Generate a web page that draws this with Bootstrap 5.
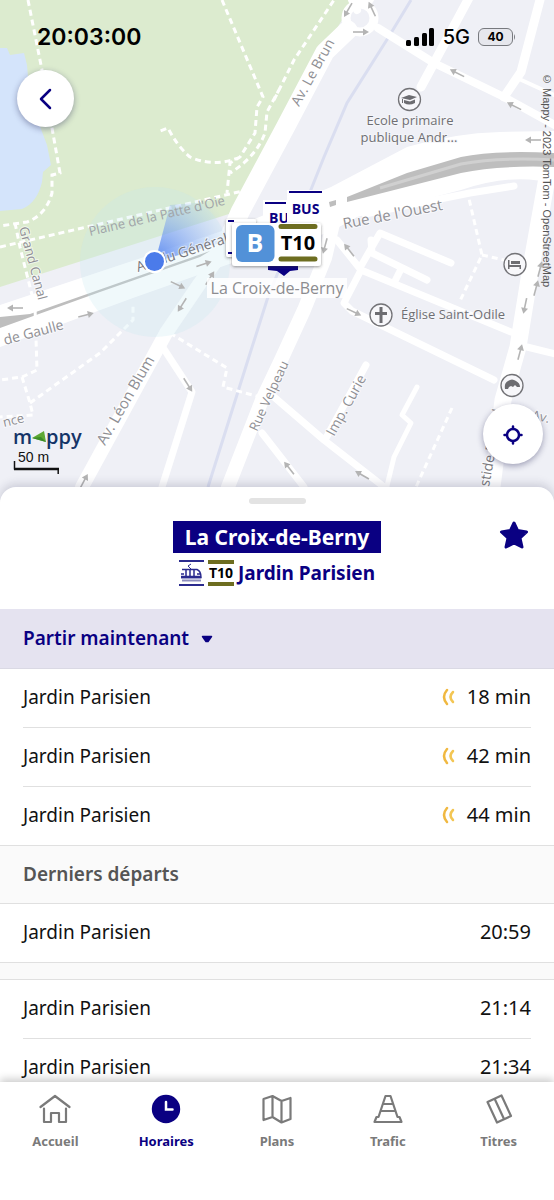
<!DOCTYPE html>
<html lang="fr">
<head>
<meta charset="utf-8">
<meta name="viewport" content="width=device-width, initial-scale=1">
<title>La Croix-de-Berny – Horaires</title>
<link href="https://cdn.jsdelivr.net/npm/bootstrap@5.3.0/dist/css/bootstrap.min.css" rel="stylesheet">
<style>
  :root { --navy: #0a0082; --line: #e0e0e0; }
  body { font-family: "Noto Sans", "Open Sans", sans-serif; color: #111; background: #fff; }
  .map-area { height: 487px; background: #eff0f6; }
  .map-drawing { width: 100%; height: 500px; display: block; }
  .map-drawing text { font-family: "Open Sans", "Noto Sans", sans-serif; }
  .status { font-family: Inter, sans-serif; color: #000; padding: 22px 38px 0 37px; line-height: 30px; }
  .clock { font-size: 23px; font-weight: 600; }
  .network { font-size: 20px; font-weight: 500; }
  .battery { width: 35px; height: 18px; line-height: 16px; font-size: 12px; font-weight: 700; border: 1px solid #77797e; border-radius: 6px; background: #e6e7ed; }
  .round-btn { background: #fff; border: 0; border-radius: 50%; padding: 0; box-shadow: 0 2px 6px rgba(30, 30, 80, .4); }
  .back-btn { width: 57px; height: 57px; left: 17px; top: 70px; }
  .locate-btn { width: 60px; height: 60px; right: 11px; bottom: 23px; }
  .attribution { writing-mode: vertical-rl; font: 11px/14px "Liberation Sans", sans-serif; color: #555; top: 73px; right: 0; }
  .map-brand { left: 13px; bottom: 13px; width: 74px; }
  .brand-name { font: 600 20px/24px "Open Sans", sans-serif; color: #143468; }
  .scale-label { font: 14px/16px "Liberation Sans", sans-serif; color: #111; padding-left: 5px; }
  .scale-bar { margin-top: -4px; }
  .sheet { background: #fff; border-radius: 16px 16px 0 0; box-shadow: 0 -3px 10px rgba(40, 40, 80, .18); min-height: 0; }
  .grip { width: 57px; height: 6px; border-radius: 3px; background: #e3e3e3; margin-top: 11px; }
  .stop-head { height: 105px; padding-top: 17px; }
  .stop-name { background: var(--navy); color: #fff; font-size: 21px; font-weight: 700; line-height: 32px; padding: 0 12px; }
  .direction { color: var(--navy); font-size: 19px; font-weight: 700; line-height: 26px; margin-top: 7px; }
  .star-btn { right: 24px; top: 15px; }
  .line-tag { width: 26px; height: 26px; border: solid #6d6d20; border-width: 4px 0; font: 700 14px/18px "Open Sans", sans-serif; color: #000; }
  .when-btn { height: 60px; background: #e5e3f0; color: var(--navy); border: 0; border-bottom: 1px solid #dad9e4; font-size: 19px; font-weight: 600; padding: 0 23px; }
  .departures { min-height: 0; overflow-y: auto; scrollbar-width: none; }
  .departures::-webkit-scrollbar { display: none; }
  .trip { height: 59px; margin: 0 23px; padding-bottom: 2px; border-bottom: 1px solid var(--line); font-size: 19px; }
  .trip-last { margin: 0; padding-left: 23px; padding-right: 23px; }
  .trip time { font-size: 20px; }
  .section-title { height: 58px; background: #fafafa; border-bottom: 1px solid var(--line); color: #555; font-size: 19px; font-weight: 600; padding: 0 23px; margin: 0; }
  .spacer-band { height: 17px; background: #fafafa; border-bottom: 1px solid var(--line); }
  .tabs { height: 118px; background: #fff; box-shadow: 0 -3px 8px rgba(0, 0, 0, .2); z-index: 2; padding-top: 11px; }
  .tab-link { color: #7a7a7a; font-size: 13px; font-weight: 700; line-height: 20px; }
  .tab-link svg { width: 32px; height: 32px; margin-bottom: 6px; }
  .tab-link.current { color: var(--navy); }
</style>
</head>
<body>
<div class="vh-100 d-flex flex-column overflow-hidden">

<header class="map-area position-relative flex-shrink-0">
  <svg class="map-drawing position-absolute top-0 start-0" viewBox="0 0 554 500" preserveAspectRatio="xMidYMin slice" role="img" aria-label="Plan du quartier">
    <defs>
      <radialGradient id="beam" gradientUnits="userSpaceOnUse" cx="155" cy="262" r="82">
        <stop offset="0" stop-color="#4a7df0" stop-opacity=".9"/><stop offset="1" stop-color="#8fb0f5" stop-opacity="0"/>
      </radialGradient>
      <filter id="soft" x="-20%" y="-20%" width="140%" height="150%"><feDropShadow dx="0" dy="1" stdDeviation="1.5" flood-color="#333" flood-opacity=".5"/></filter>
      <g id="arrow" fill="none" stroke="#b4b4b4" stroke-width="1.6"><path d="M-8 0H4"/><path d="M8 0L2-3.500V3.500Z" fill="#b4b4b4" stroke="none"/></g>
    </defs>
    <rect width="554" height="500" fill="#eff0f6"/>
    <path d="M0 0H353L342 20 278 126 232 213 0 287Z" fill="#dcebcf"/>
    <path d="M0 48H7L10 55 24 53 27 65 30 100 47 145 51 165 43 172 42 182Q37 203 22 209L0 211Z" fill="#d4e4fb"/>
    <!-- canal -->
    <path d="M411 0L388 38 347 103 324 157 312 187 267 300 247 363 208 487" fill="none" stroke="#dadef0" stroke-width="3"/>
    <!-- streets -->
    <g fill="none" stroke="#fff" stroke-linejoin="round" stroke-linecap="round">
      <circle cx="360" cy="18" r="14" stroke-width="9"/>
      <path d="M348 30L325 52 285 128 240 212 226 245" stroke-width="19"/>
      <path d="M235 235L200 283 166 333 82 487" stroke-width="14"/>
      <path d="M352 0L357 10M367 4L372-4" stroke-width="8"/>
      <path d="M378 28L434 63 504 97 560 128" stroke-width="8"/>
      <path d="M470-4L434 63 421 87M541-4L521 72 504 97" stroke-width="9"/>
      <path d="M517 78L554 95" stroke-width="4"/>
      <path d="M335 215L325 258 304 310 281 360 262 400 228 487" stroke-width="14"/>
      <path d="M337 240L361 270 344 303 352 311 494 380M361 270L511 332" stroke-width="7"/>
      <path d="M361 266L380 233 451 263M371 240L372 253 427 280M401 269L395 281" stroke-width="7"/>
      <path d="M552 150L530 273 518 347 503 400 492 487" stroke-width="17"/>
      <path d="M527 347L560 355M274 397L324 440 388 490M262 433L304 487M366 365L326 438" stroke-width="7"/>
      <path d="M417 387L402 415 411 423 394 457 386 490" stroke-width="5"/>
      <path d="M160 343L192 392 162 487" stroke-width="7"/>
      <path d="M365 214L470 193 514 186" stroke-width="7"/>
    </g>
    <path d="M0 305L120 265 240 225 331 187 407 147Q455 133 500 132L554 131V184Q515 172 461 190L357 217 330 232 235 262 133 298 0 347Z" fill="#fff"/>
    <path d="M0 317L30 314 210 251 200 257 100 292 0 328Z" fill="#bebebe"/>
    <path d="M347 197L407 173 461 157Q494 150 554 153V167Q500 165 461 173L347 202Z" fill="#bebebe"/>
    <path d="M380 188L461 164Q500 157 554 160" fill="none" stroke="#d0d0d0" stroke-width="3"/>
    <path d="M329 202L336 200V205L330 207Z" fill="#bebebe"/>
    <!-- footpaths -->
    <g fill="none" stroke="#fff" stroke-width="3" stroke-dasharray="6 4">
      <path d="M28 0L42 70 52 128 60 173 52 175V193Q46 215 27 222L0 226M0 247L247 190"/>
      <path d="M15 223L20 247 35 307 37 370 22 377 0 380M22 377L30 403 33 415 0 417M30 403L100 353 133 320V303"/>
      <path d="M170 333L227 368 223 387 260 397"/>
      <path d="M222 0L263 97 257 107 255 133 240 157 230 163 227 193M240 157Q215 168 190 157 177 146 168 128L158 132"/>
      <path d="M280 88L267 112 265 133Q256 157 230 173M274 100L294 60 334 0"/>
      <path d="M467 190L482 255 459 303M482 255L504 260M452 408L416 487"/>
    </g>
    <!-- position accuracy and heading -->
    <circle cx="155" cy="262" r="75" fill="#c3e8ee" fill-opacity=".25"/>
    <path d="M155 262L170 205 232 200 237 238Z" fill="url(#beam)"/>
    <g>
      <use href="#arrow" transform="translate(348 10) rotate(120)"/><use href="#arrow" transform="translate(372 9) rotate(245)"/>
      <use href="#arrow" transform="translate(361 32)"/><use href="#arrow" transform="translate(457 73) rotate(207)"/>
      <use href="#arrow" transform="translate(514 106) rotate(207)"/><use href="#arrow" transform="translate(533 140) rotate(180)"/>
      <use href="#arrow" transform="translate(15 308) rotate(180)"/><use href="#arrow" transform="translate(86 315) rotate(-14)"/>
      <use href="#arrow" transform="translate(204 264) rotate(-18)"/><use href="#arrow" transform="translate(178 285) rotate(25)"/>
      <use href="#arrow" transform="translate(182 305) rotate(122)"/><use href="#arrow" transform="translate(210 278) rotate(-58)"/>
      <use href="#arrow" transform="translate(188 385) rotate(58)"/><use href="#arrow" transform="translate(84 481) rotate(-62)"/>
      <use href="#arrow" transform="translate(349 250) rotate(232)"/><use href="#arrow" transform="translate(354 312) rotate(25)"/>
      <use href="#arrow" transform="translate(325 246) rotate(105)"/><use href="#arrow" transform="translate(540 269) rotate(-75)"/>
      <use href="#arrow" transform="translate(536 288) rotate(-75)"/><use href="#arrow" transform="translate(525 306) rotate(102)"/>
      <use href="#arrow" transform="translate(520 352) rotate(-75)"/><use href="#arrow" transform="translate(289 468) rotate(232)"/>
      <use href="#arrow" transform="translate(362 475) rotate(210)"/>
    </g>
    <!-- labels -->
    <g fill="#8f8f94" font-size="14" stroke="#fff" stroke-width="2" stroke-opacity=".6" paint-order="stroke">
      <text transform="translate(299 107) rotate(-61)">Av. Le Brun</text>
      <text transform="translate(90 236) rotate(-13)" font-size="13" fill="#a0a4a8" stroke-opacity="0">Plaine de la Patte d'Oie</text>
      <text transform="translate(344 229) rotate(-11)" font-size="15">Rue de l'Ouest</text>
      <text transform="translate(19 228) rotate(75)" font-size="13">Grand Canal</text>
      <text transform="translate(5 345) rotate(-15)" font-size="14">de Gaulle</text>
      <text transform="translate(4 427) rotate(-13)" font-size="13">nce</text>
      <text transform="translate(105 446) rotate(-60)" font-size="15">Av. Léon Blum</text>
      <text transform="translate(257 432) rotate(-65)" font-size="13">Rue Velpeau</text>
      <text transform="translate(334 437) rotate(-61)">Imp. Curie</text>
      <text transform="translate(531 419) rotate(13)" font-size="13">Av.</text>
      <text transform="translate(489 487) rotate(-80)" fill="#77777c">stide Briand</text>
      <text transform="translate(138 272) rotate(-18)" fill="#77777c">Av. du Général</text>
    </g>
    <circle cx="154.500" cy="261.500" r="11.500" fill="#fff"/><circle cx="154.500" cy="261.500" r="9.500" fill="#4b7bea"/>
    <g fill="#6f6f73" font-size="13" stroke="#f4f5f9" stroke-width="2" paint-order="stroke" text-anchor="middle">
      <text x="410" y="125">Ecole primaire</text><text x="409" y="142">publique Andr...</text>
      <text x="453" y="319">Église Saint-Odile</text>
    </g>
    <!-- places -->
    <g fill="#f7f7fa" stroke="#737377" stroke-width="1.300">
      <circle cx="409.500" cy="99.500" r="11"/><circle cx="381" cy="315" r="11"/><circle cx="515" cy="264.500" r="11"/><circle cx="512" cy="385.500" r="11"/>
    </g>
    <g fill="#6d6d71">
      <path d="M401 98L409 95 417 97 410 100ZM404 100L410 101.500 415 99.500V103Q409 106 404 103ZM402 99H403V103H402Z"/>
      <path d="M379.500 307H382.500V312H387V315H382.500V323H379.500V315H375V312H379.500Z"/>
      <path d="M508 260H509.500V265H521V269H519.500V267H509.500V269H508ZM511 261H520V264H511Z"/>
      <path d="M505 389Q504 383 508 381 512 378 516 381 520 383 520 387L517 387 515 385 513 387 511 386 509 387 508 389Z"/>
    </g>
    <!-- station -->
    <rect x="207" y="278" width="140" height="20" fill="#fff" fill-opacity=".85"/>
    <text x="277" y="294" font-size="16" fill="#8c8c90" text-anchor="middle">La Croix-de-Berny</text>
    <path d="M268 266H298V270L290 271 284 276 277 271 268 270Z" fill="#0a0082"/>
    <g filter="url(#soft)">
      <rect x="226" y="219" width="30" height="38" rx="2" fill="#fff"/>
    </g>
    <path d="M228 221H234M228 253H234" stroke="#0a0082" stroke-width="2"/>
    <rect x="263" y="200" width="26" height="26" fill="#fff"/><path d="M265 203H286" stroke="#0a0082" stroke-width="2"/>
    <text x="269" y="223" font-size="14" font-weight="700" fill="#0a0082">BU</text>
    <rect x="287" y="190" width="38" height="40" fill="#fff"/><path d="M289 192H322" stroke="#0a0082" stroke-width="2"/>
    <text x="305.500" y="214" font-size="14" font-weight="700" fill="#0a0082" text-anchor="middle">BUS</text>
    <rect x="232" y="223" width="89" height="43" rx="3" fill="#fff" filter="url(#soft)"/>
    <rect x="236" y="225" width="38.500" height="37" rx="6" fill="#5291d8"/>
    <text x="255" y="252" font-size="25" font-weight="700" fill="#fff" text-anchor="middle">B</text>
    <path d="M281 226.500H315M281 259H315" stroke="#6d6d20" stroke-width="5" stroke-linecap="round"/>
    <text x="298" y="250" font-size="20" font-weight="700" fill="#000" text-anchor="middle">T10</text>
  </svg>

  <div class="status position-relative d-flex align-items-center">
    <span class="clock me-auto">20:03:00</span>
    <svg width="29" height="18" viewBox="0 0 29 18" aria-label="Réseau"><g fill="#000"><rect x="0" y="12" width="5" height="6" rx="1.500"/><rect x="8" y="9" width="5" height="9" rx="1.500"/><rect x="16" y="5" width="5" height="13" rx="1.500"/><rect x="23" y="0" width="5" height="18" rx="1.500"/></g></svg>
    <span class="network mx-2">5G</span>
    <span class="battery text-center">40</span>
    <svg width="3" height="6" viewBox="0 0 3 6" aria-hidden="true"><path d="M1 0Q3 3 1 6Z" fill="#77797e"/></svg>
  </div>

  <button type="button" class="round-btn back-btn position-absolute" aria-label="Retour">
    <svg width="20" height="24" viewBox="0 0 20 24" fill="none" stroke="#0a0082" stroke-width="2.500" stroke-linecap="round" stroke-linejoin="round"><path d="M14 3L5 12 14 21"/></svg>
  </button>
  <span class="attribution position-absolute text-nowrap">© Mappy - 2023 TomTom - OpenStreetMap</span>
  <div class="map-brand position-absolute">
    <div class="brand-name d-flex align-items-center"><span>m</span><svg width="14" height="12" viewBox="0 0 14 12" aria-hidden="true"><path d="M0 7L12 0 14 11Z" fill="#5ea834"/><path d="M0 7L9 6 14 11Z" fill="#3c8b28"/></svg><span>ppy</span></div>
    <div class="scale-label">50 m</div>
    <svg class="scale-bar d-block" width="46" height="13" viewBox="0 0 46 13" fill="none" stroke="#111" aria-hidden="true"><path d="M1.500 0V8.500" stroke-width="1.500"/><path d="M1 8H46" stroke-width="2.500"/><path d="M45.200 8V13" stroke-width="1.500"/></svg>
  </div>
  <button type="button" class="round-btn locate-btn position-absolute" aria-label="Ma position">
    <svg width="22" height="22" viewBox="0 0 22 22" fill="none" stroke="#0a0082"><circle cx="11" cy="11" r="6" stroke-width="2.500"/><path d="M11 2.500V4.500M11 17.500V19.500M2.500 11H4.500M17.500 11H19.500" stroke-width="2.500" stroke-linecap="round"/></svg>
  </button>
</header>

<main class="sheet position-relative flex-grow-1 d-flex flex-column">
  <div class="grip mx-auto flex-shrink-0"></div>
  <div class="stop-head position-relative d-flex flex-column align-items-center flex-shrink-0">
    <h1 class="stop-name m-0">La Croix-de-Berny</h1>
    <p class="direction d-flex align-items-center mb-0">
      <svg class="me-1" width="25" height="26" viewBox="0 0 25 26" fill="none" stroke="#2a2a8e" aria-label="Tramway"><path d="M0 1H25M0 25H25" stroke-width="2"/><path d="M3 20.500H22" stroke="#8e8ebf" stroke-width="2"/><path d="M3 9.500H18Q22 11 22 17.500H2M5 14H2M7 9V17M11 9V17M15 9V17M18 14H22" stroke-width="1.500"/><path d="M2 17H22" stroke-width="2.500"/><path d="M12 9L9 6 12 4" stroke-width="1"/></svg>
      <span class="line-tag text-center me-1">T10</span>
      <span>Jardin Parisien</span>
    </p>
    <button type="button" class="star-btn btn p-0 border-0 position-absolute" aria-label="Favori">
      <svg width="32" height="32" viewBox="0 0 32 32"><path d="M16 4L19.500 11.500 28.500 13 22 19 24 28 16 24 8 28 10 19 3.500 13 12.500 11.500Z" fill="#0a0082" stroke="#0a0082" stroke-width="3" stroke-linejoin="round"/></svg>
    </button>
  </div>
  <button type="button" class="when-btn w-100 d-flex align-items-center flex-shrink-0" aria-haspopup="listbox">Partir maintenant
    <svg class="ms-2" width="20" height="8" viewBox="0 0 20 8" aria-hidden="true"><path d="M5.500 1.500H14.500L11 6.500H9Z" fill="#0a0082" stroke="#0a0082" stroke-linejoin="round" stroke-width="1.500"/></svg>
  </button>
  <div class="departures flex-grow-1">
    <svg class="d-none"><symbol id="live" viewBox="0 0 14 18"><path d="M6 2Q0 9 6 16" fill="none" stroke="#f0b840" stroke-width="2.500" stroke-linecap="round"/><path d="M12 4Q7 9 12 14" fill="none" stroke="#f3c654" stroke-width="2.500" stroke-linecap="round"/></symbol></svg>
    <ul class="list-unstyled m-0">
      <li class="trip d-flex align-items-center"><span class="me-auto">Jardin Parisien</span><svg class="me-2" width="14" height="18"><use href="#live"/></svg><time class="ms-1">18 min</time></li>
      <li class="trip d-flex align-items-center"><span class="me-auto">Jardin Parisien</span><svg class="me-2" width="14" height="18"><use href="#live"/></svg><time class="ms-1">42 min</time></li>
      <li class="trip trip-last d-flex align-items-center"><span class="me-auto">Jardin Parisien</span><svg class="me-2" width="14" height="18"><use href="#live"/></svg><time class="ms-1">44 min</time></li>
    </ul>
    <h2 class="section-title d-flex align-items-center">Derniers départs</h2>
    <ul class="list-unstyled m-0">
      <li class="trip trip-last d-flex align-items-center"><span class="me-auto">Jardin Parisien</span><time>20:59</time></li>
    </ul>
    <div class="spacer-band"></div>
    <ul class="list-unstyled m-0">
      <li class="trip d-flex align-items-center"><span class="me-auto">Jardin Parisien</span><time>21:14</time></li>
      <li class="trip d-flex align-items-center"><span class="me-auto">Jardin Parisien</span><time>21:34</time></li>
    </ul>
  </div>
</main>

<nav class="tabs flex-shrink-0 position-relative" aria-label="Navigation principale">
  <div class="row g-0 text-center">
    <a class="col tab-link text-decoration-none" href="#accueil"><svg class="d-block mx-auto" viewBox="0 0 32 32" fill="none" stroke="currentColor" stroke-width="2.200" stroke-linejoin="round" stroke-linecap="round"><path d="M1.500 14L16 3 30.500 14M5 15.500V29H12V20H20V29H27V15.500"/></svg>Accueil</a>
    <a class="col tab-link current text-decoration-none" href="#horaires" aria-current="page"><svg class="d-block mx-auto" viewBox="0 0 32 32"><circle cx="16" cy="16" r="14.200" fill="currentColor"/><path d="M16 9V16.500H22.500" fill="none" stroke="#fff" stroke-width="2.500" stroke-linecap="round"/></svg>Horaires</a>
    <a class="col tab-link text-decoration-none" href="#plans"><svg class="d-block mx-auto" viewBox="0 0 32 32" fill="none" stroke="currentColor" stroke-width="2.200" stroke-linejoin="round"><path d="M2.500 6L11.500 3 20.500 8 29.500 5V26L20.500 29.500 11.500 24 2.500 27ZM11.500 3V24M20.500 8V29.500"/></svg>Plans</a>
    <a class="col tab-link text-decoration-none" href="#trafic"><svg class="d-block mx-auto" viewBox="0 0 32 32" fill="none" stroke="currentColor" stroke-width="2.200" stroke-linejoin="round"><path d="M13.500 3H18.500L25.500 24H27.500L29.500 29H2.500L4.500 24H6.500ZM11 11H21M8.500 18H23.500"/></svg>Trafic</a>
    <a class="col tab-link text-decoration-none" href="#titres"><svg class="d-block mx-auto" viewBox="0 0 32 32" fill="none" stroke="currentColor" stroke-width="2.200" stroke-linejoin="round"><path d="M4.500 9L18.500 2.500 28 23 14 29.500ZM11.500 5.500L21 26"/></svg>Titres</a>
  </div>
</nav>
</div>
<script src="https://cdn.jsdelivr.net/npm/bootstrap@5.3.0/dist/js/bootstrap.bundle.min.js"></script>
</body>
</html>
